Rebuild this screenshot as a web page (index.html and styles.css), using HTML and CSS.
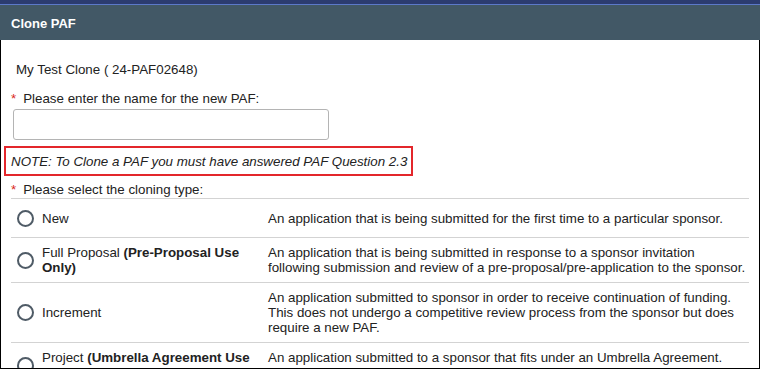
FILE: index.html
```html
<!DOCTYPE html>
<html lang="en">
<head>
<meta charset="utf-8">
<title>Clone PAF</title>
<link rel="stylesheet" href="styles.css">
</head>
<body>
<div class="dialog">
  <div class="dialog-header"><h1 class="dialog-title">Clone PAF</h1></div>
  <div class="dialog-body">
    <p class="source-name">My Test Clone ( 24-PAF02648)</p>
    <label class="field-label" for="pafname"><span class="req">*</span>Please enter the name for the new PAF:</label>
    <input class="text-input" id="pafname" type="text">
    <div class="note">NOTE: To Clone a PAF you must have answered PAF Question 2.3</div>
    <div class="field-label"><span class="req">*</span>Please select the cloning type:</div>
    <div class="options">
      <label class="option">
        <span class="opt-radio"><input type="radio" name="ctype"></span>
        <span class="opt-name">New</span>
        <span class="opt-desc">An application that is being submitted for the first time to a particular sponsor.</span>
      </label>
      <label class="option">
        <span class="opt-radio"><input type="radio" name="ctype"></span>
        <span class="opt-name">Full Proposal <b>(Pre-Proposal Use Only)</b></span>
        <span class="opt-desc">An application that is being submitted in response to a sponsor invitation following submission and review of a pre-proposal/pre-application to the sponsor.</span>
      </label>
      <label class="option">
        <span class="opt-radio"><input type="radio" name="ctype"></span>
        <span class="opt-name">Increment</span>
        <span class="opt-desc">An application submitted to sponsor in order to receive continuation of funding. This does not undergo a competitive review process from the sponsor but does require a new PAF.</span>
      </label>
      <label class="option">
        <span class="opt-radio"><input type="radio" name="ctype"></span>
        <span class="opt-name">Project <b>(Umbrella Agreement Use Only)</b></span>
        <span class="opt-desc">An application submitted to a sponsor that fits under an Umbrella Agreement. Must be approved through all necessary steps to be used in the system.</span>
      </label>
    </div>
  </div>
</div>
</body>
</html>
```
FILE: styles.css
```css
* { box-sizing: border-box; }
html, body { margin: 0; padding: 0; background: #fff; }
body {
  font-family: "Liberation Sans", Arial, sans-serif;
  font-size: 13.333px;
  line-height: 15px;
  color: #222;
  width: 760px;
  height: 369px;
  overflow: hidden;
}
.dialog {
  width: 760px;
  height: 369px;
  display: flex;
  flex-direction: column;
  border-bottom: 1px solid #000;
}
.dialog-header {
  border-top: 4px solid #2c3c70;
  box-shadow: inset 0 1px 0 #5c79c9;
  background: #425866;
  height: 40px;
  padding: 12px 11px 0;
}
.dialog-title {
  margin: 0;
  font-size: 13px;
  font-weight: bold;
  line-height: 15px;
  color: #fff;
}
.dialog-body {
  flex: 1;
  overflow: hidden;
  border-left: 1px solid #000;
  border-right: 1px solid #000;
  padding: 22px 10px 0;
}
.source-name {
  margin: 0 0 14px 5px;
}
.field-label {
  display: block;
}
.req {
  color: #d9261c;
  margin-right: 7px;
}
.text-input {
  display: block;
  margin: 3px 0 0 2px;
  width: 316px;
  height: 31px;
  border: 1px solid #b4b4b4;
  border-radius: 3px;
  font: inherit;
}
.note {
  display: inline-block;
  margin: 6px 0 6px -7px;
  border: 2px solid #e3262b;
  padding: 6px 4px 5px 5px;
  font-style: italic;
}
.options {
  margin-top: 1px;
}
.option {
  display: grid;
  grid-template-columns: 31px 226px 1fr;
  align-items: center;
  border-top: 1px solid #d3d3d3;
  padding: 7px 0;
  min-height: 39px;
}
.opt-radio {
  display: flex;
  align-items: center;
  height: 24px;
  padding-left: 6px;
}
.opt-radio input {
  appearance: none;
  -webkit-appearance: none;
  margin: 0;
  width: 17px;
  height: 17px;
  border: 2px solid #4f5b66;
  border-radius: 50%;
  background: #fff;
}
.opt-name {
  padding-right: 14px;
}
.opt-desc {
  padding-right: 2px;
}
```
